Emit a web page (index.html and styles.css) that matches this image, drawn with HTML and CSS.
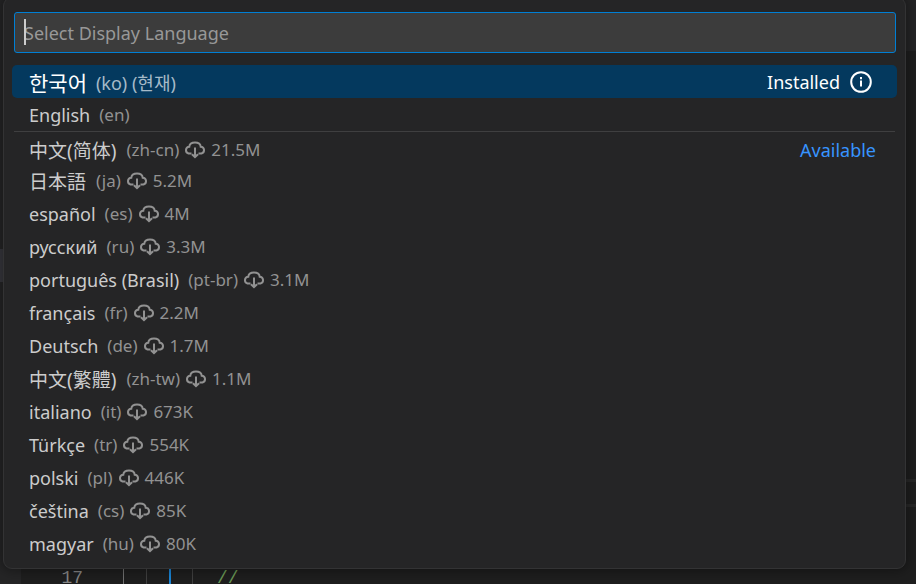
FILE: index.html
```html
<!DOCTYPE html>
<html lang="ko">
<head>
<meta charset="UTF-8">
<meta name="viewport" content="width=device-width, initial-scale=1.0">
<title>Select Display Language</title>
<link rel="stylesheet" href="styles.css">
</head>
<body>
<div class="sidebar"><div class="sidebar-item"></div></div>
<div class="editor">
    <div class="tabs"></div>
    <div class="code">
        <div class="line current"></div>
        <div class="line"></div>
        <div class="line"></div>
        <div class="line">
            <span class="line-number">17</span>
            <span class="guide first"></span>
            <span class="guide"></span>
            <span class="guide active"></span>
            <span class="guide"></span>
            <span class="comment">//</span>
        </div>
    </div>
</div>

<div class="quick-input">
    <svg class="defs" aria-hidden="true">
        <symbol id="cloud" viewBox="0 0 22 18">
            <path d="M7.500 12.500H4.500A3.500 3.500 0 0 1 4.800 5.700H5.300C5.600 3 7.800 1.500 11 1.500S16.400 3 16.700 5.700H17.200A3.500 3.500 0 0 1 17.500 12.500H14.500M11 6.500V16M8 13.200L11 16.200L14 13.200"/>
        </symbol>
    </svg>
    <div class="input-box">
        <input type="text" id="filter" placeholder="Select Display Language" aria-label="Select Display Language">
        <span class="caret"></span>
    </div>
    <ul class="list" role="listbox" aria-label="Select Display Language">
        <li class="row selected" role="option" aria-selected="true">
            <span class="label" lang="ko">한국어</span>
            <span class="description">(ko) (현재)</span>
            <span class="group">Installed</span>
            <button class="info" aria-label="Info">
                <svg viewBox="0 0 22 22"><circle cx="11" cy="11" r="9.800"/><path d="M11 9.500V15.500M11 6V8.200"/></svg>
            </button>
        </li>
        <li class="row" role="option">
            <span class="label">English</span>
            <span class="description">(en)</span>
        </li>
        <li class="row separated" role="option">
            <span class="label" lang="zh-CN">中文(简体)</span>
            <span class="description">(zh-cn) <svg class="cloud"><use href="#cloud"/></svg> 21.5M</span>
            <span class="group available">Available</span>
        </li>
        <li class="row" role="option">
            <span class="label" lang="ja">日本語</span>
            <span class="description">(ja) <svg class="cloud"><use href="#cloud"/></svg> 5.2M</span>
        </li>
        <li class="row" role="option">
            <span class="label">español</span>
            <span class="description">(es) <svg class="cloud"><use href="#cloud"/></svg> 4M</span>
        </li>
        <li class="row" role="option">
            <span class="label">русский</span>
            <span class="description">(ru) <svg class="cloud"><use href="#cloud"/></svg> 3.3M</span>
        </li>
        <li class="row" role="option">
            <span class="label">português (Brasil)</span>
            <span class="description">(pt-br) <svg class="cloud"><use href="#cloud"/></svg> 3.1M</span>
        </li>
        <li class="row" role="option">
            <span class="label">français</span>
            <span class="description">(fr) <svg class="cloud"><use href="#cloud"/></svg> 2.2M</span>
        </li>
        <li class="row" role="option">
            <span class="label">Deutsch</span>
            <span class="description">(de) <svg class="cloud"><use href="#cloud"/></svg> 1.7M</span>
        </li>
        <li class="row" role="option">
            <span class="label" lang="zh-TW">中文(繁體)</span>
            <span class="description">(zh-tw) <svg class="cloud"><use href="#cloud"/></svg> 1.1M</span>
        </li>
        <li class="row" role="option">
            <span class="label">italiano</span>
            <span class="description">(it) <svg class="cloud"><use href="#cloud"/></svg> 673K</span>
        </li>
        <li class="row" role="option">
            <span class="label">Türkçe</span>
            <span class="description">(tr) <svg class="cloud"><use href="#cloud"/></svg> 554K</span>
        </li>
        <li class="row" role="option">
            <span class="label">polski</span>
            <span class="description">(pl) <svg class="cloud"><use href="#cloud"/></svg> 446K</span>
        </li>
        <li class="row" role="option">
            <span class="label">čeština</span>
            <span class="description">(cs) <svg class="cloud"><use href="#cloud"/></svg> 85K</span>
        </li>
        <li class="row" role="option">
            <span class="label">magyar</span>
            <span class="description">(hu) <svg class="cloud"><use href="#cloud"/></svg> 80K</span>
        </li>
    </ul>
</div>
</body>
</html>
```

FILE: styles.css
```css
* {
    box-sizing: border-box;
}
body {
    margin: 0;
    height: 100vh;
    display: flex;
    overflow: hidden;
    background-color: #1e1e1e;
    color: #cccccc;
    font-family: "Noto Sans", "Noto Sans CJK KR", sans-serif;
    font-size: 18px;
}
/* editor behind the picker */
.sidebar {
    width: 21px;
    padding-top: 249px;
    background-color: #252526;
}
.sidebar-item {
    height: 33px;
    background-color: #37373d;
}
.editor {
    flex: 1;
    display: flex;
    flex-direction: column;
    justify-content: space-between;
}
.tabs {
    height: 51px;
    background-color: #252526;
}
.code {
    margin-bottom: -7px;
    font-family: "Liberation Mono", monospace;
}
.line {
    display: flex;
    height: 28px;
    line-height: 30px;
}
.line.current {
    border: solid #282828;
    border-width: 3px 0;
}
.line-number {
    width: 62px;
    text-align: right;
    color: #858585;
}
.guide {
    width: 23px;
    border-left: 1px solid #404040;
}
.guide.first {
    margin-left: 40px;
    border-color: #707070;
}
.guide.active {
    border-left: 2px solid #1a85d6;
}
.comment {
    margin-left: 2px;
    color: #6a9955;
}
/* picker */
.quick-input {
    position: absolute;
    top: -3px;
    left: 3px;
    right: 10px;
    padding: 14px 8px 8px;
    background-color: #252526;
    border: 1px solid #333334;
    border-radius: 9px;
    box-shadow: 0 0 12px 2px rgba(0, 0, 0, 0.36);
}
.defs {
    display: none;
}
.input-box {
    position: relative;
    margin: 0 1px 12px 2px;
}
.input-box input {
    display: block;
    width: 100%;
    height: 41px;
    padding: 0 9px;
    border: 1px solid #007fd4;
    border-radius: 3px;
    outline: none;
    background-color: #3c3c3c;
    color: #cccccc;
    font: inherit;
}
.input-box input::placeholder {
    color: #989898;
    opacity: 1;
}
.caret {
    position: absolute;
    top: 7px;
    left: 10px;
    width: 2px;
    height: 26px;
    background-color: #cccccc;
}
.list {
    margin: 0;
    padding: 0;
    list-style: none;
}
.row {
    display: flex;
    align-items: center;
    height: 33px;
    padding: 0 25px 0 17px;
    border-radius: 5px;
    white-space: nowrap;
}
.row.selected {
    background-color: #04395e;
    color: #ffffff;
}
.row.separated {
    margin: 0 2px;
    padding: 3px 19px 0 15px;
    border-top: 1px solid #3f3f40;
    border-radius: 0;
}
.label {
    margin-right: 9px;
}
.label[lang] {
    margin-right: 10px;
    font-size: 19px;
}
.label[lang="ko"] {
    margin-right: 9px;
    font-size: 21px;
}
.label[lang="zh-CN"] {
    font-family: "Noto Sans", "Noto Sans CJK SC", sans-serif;
}
.label[lang="zh-TW"] {
    font-family: "Noto Sans", "Noto Sans CJK TC", sans-serif;
}
.label[lang="ja"] {
    font-family: "Noto Sans", "Noto Sans CJK JP", sans-serif;
}
.description {
    display: flex;
    align-items: center;
    gap: 5px;
    font-size: 17px;
    color: #929292;
}
.selected .description {
    font-size: 18px;
    color: #a6bac8;
}
.cloud {
    width: 22px;
    height: 18px;
    fill: none;
    stroke: #929292;
    stroke-width: 2;
}
.group {
    margin-left: auto;
}
.group.available {
    color: #3794ff;
}
.info {
    display: flex;
    width: 22px;
    height: 22px;
    margin-left: 10px;
    padding: 0;
    border: none;
    background: none;
    cursor: pointer;
}
.info svg {
    width: 22px;
    height: 22px;
    fill: none;
    stroke: #ffffff;
    stroke-width: 2;
}
```
